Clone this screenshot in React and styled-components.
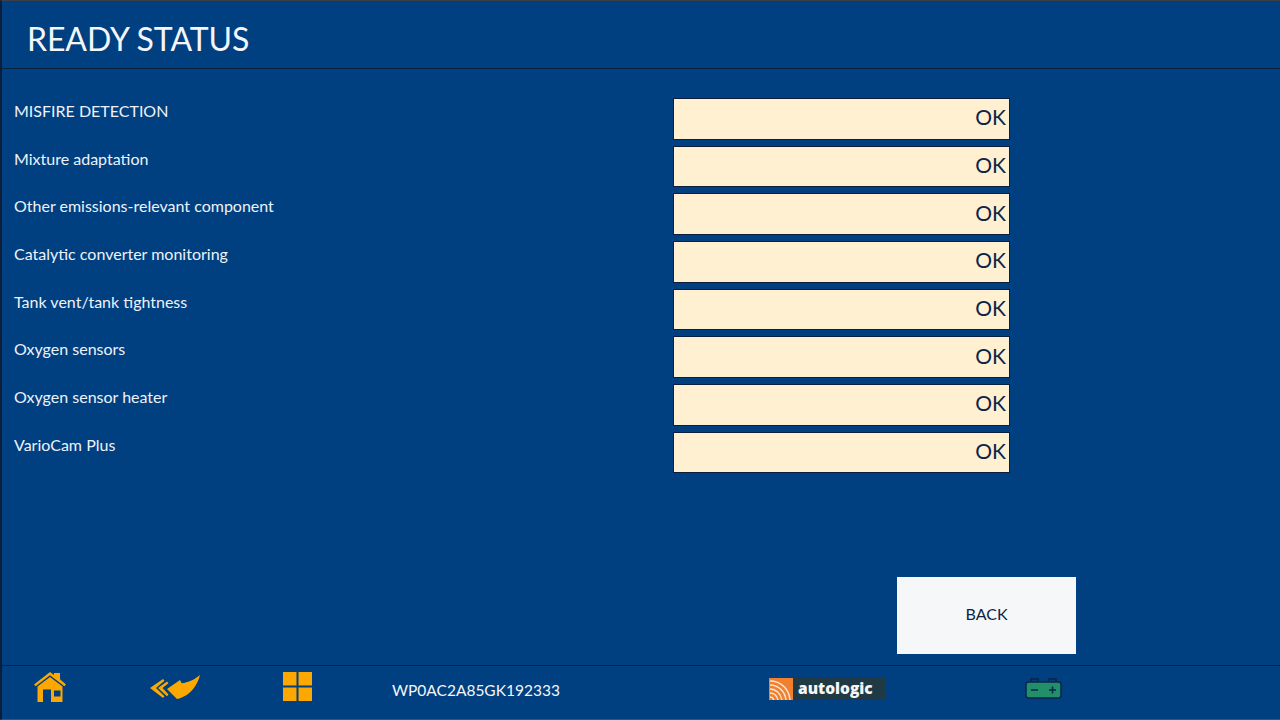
import React from "react";
import styled, { createGlobalStyle } from "styled-components";

const Global = createGlobalStyle`
  html, body { margin: 0; padding: 0; background: #003f80; }
  * { box-sizing: border-box; }
`;

const Screen = styled.div`
  width: 1280px;
  height: 720px;
  display: flex;
  flex-direction: column;
  overflow: hidden;
  background: #003f80;
  border-left: 2px solid #0b1f3c;
  border-top: 1px solid #3a3f48;
  border-bottom: 1px solid #2f5688;
  font-family: Lato, "Open Sans", sans-serif;
  color: #f4f6fa;
`;

const Header = styled.header`
  height: 68px;
  flex: none;
  display: flex;
  align-items: center;
  padding: 9px 0 0 25px;
  border-bottom: 1px solid #08213f;
`;

const Title = styled.h1`
  margin: 0;
  font-size: 32px;
  font-weight: 400;
  letter-spacing: -0.1px;
  line-height: 1;
`;

const Main = styled.main`
  flex: 1;
  display: flex;
  flex-direction: column;
  padding: 29px 204px 11px 12px;
`;

const Rows = styled.div`
  display: flex;
  flex-direction: column;
  gap: 6.2px;
`;

const Row = styled.div`
  display: grid;
  grid-template-columns: 659px 337px;
  height: 41.5px;
`;

const Label = styled.div`
  font-size: 16px;
  line-height: 20px;
  padding-top: 3px;
  color: #eef2f8;
`;

const Value = styled.div`
  height: 41.5px;
  display: flex;
  align-items: center;
  justify-content: flex-end;
  padding: 0 3px 4px 0;
  background: #fff0d2;
  border: 1px solid #0b1f3c;
  color: #0b2547;
  font-size: 21px;
`;

const Actions = styled.div`
  margin-top: auto;
  display: flex;
  justify-content: flex-end;
`;

const BackButton = styled.button`
  width: 179px;
  height: 77px;
  border: none;
  background: #f6f7f9;
  color: #0b2547;
  font-family: inherit;
  font-size: 16px;
  padding: 0 0 5px;
`;

const Footer = styled.footer`
  height: 54px;
  flex: none;
  display: flex;
  align-items: flex-start;
  padding-left: 31px;
  border-top: 1px solid #08213f;
`;

const Slot = styled.div`
  display: flex;
  flex: none;
  align-items: center;
  margin-left: ${(p) => p.$ml || 0}px;
  margin-top: ${(p) => p.$mt || 0}px;
`;

const Vin = styled.div`
  width: 170px;
  font-size: 15.5px;
  line-height: 19px;
  white-space: nowrap;
  color: #f4f6fa;
`;

const Logo = styled.div`
  display: flex;
  align-items: center;
  height: 22px;
`;

const LogoName = styled.span`
  height: 22px;
  width: 92px;
  background: #1f3a44;
  color: #f4f6fa;
  font-family: "Open Sans", sans-serif;
  font-weight: 800;
  font-size: 15.5px;
  line-height: 21px;
  padding-left: 5px;
`;

const Home = () => (
  <svg width="34" height="30" viewBox="0 0 34 30" display="block">
    <path fill="#fca800" d="M21 1h6v6.200l6 5.300-1.600 1.800L17 3.300 2.600 14.300 1 12.500 17 0l4 3z" />
    <path fill="#fca800" fillRule="evenodd" d="M4.500 14.500 17 5l12.500 9.500V30H18V17.500h-8V30H4.500zM21 18.500v6h6.500v-6z" />
  </svg>
);

const Back = () => (
  <svg width="52" height="25" viewBox="0 0 52 25" display="block">
    <path fill="#fca800" d="M0 13 13 4l1.500 1.800L6 13l8.500 8.200L13 23z" />
    <path fill="#fca800" d="M8 13 17 6.500l1.500 1.800L12.500 13l6 6.500-1.500 1.800z" />
    <path fill="#fca800" d="M17 14 30 5l1.700 3.300C38 7.500 45 4.500 50 0c-2 8-7 16-13.300 20-3 1.800-7 3.500-9.700 4z" />
  </svg>
);

const Tiles = () => (
  <svg width="29" height="29" viewBox="0 0 29 29" display="block">
    <path fill="#fca800" d="M0 0h13.500v13.500H0zM15.500 0H29v13.500H15.500zM0 15.500h13.500V29H0zM15.500 15.500H29V29H15.500z" />
  </svg>
);

const LogoMark = () => (
  <svg width="24" height="22" viewBox="0 0 24 22" display="block">
    <rect width="24" height="22" fill="#f08030" />
    <g fill="none" stroke="#fde3c8" strokeWidth="1.400">
      <path d="M1 3c11 0 19 8 20 19" />
      <path d="M1 7c8 0 15 6 16 15" />
      <path d="M1 11c6 0 11 5 12 11" />
      <path d="M1 15c4 0 7 3 8 7" />
      <path d="M1 19c2 0 3 1 4 3" />
    </g>
  </svg>
);

const Battery = () => (
  <svg width="37" height="21" viewBox="0 0 37 21" display="block">
    <path fill="none" stroke="#0b2547" strokeWidth="1.500" d="M6 4V1h7v3M24 4V1h7v3" />
    <rect x="1" y="4" width="35" height="16" rx="2.500" fill="#21906a" stroke="#0b2547" strokeWidth="1.500" />
    <path stroke="#0b2547" strokeWidth="1.600" d="M6 12h7M24 12h7M27.500 8.500v7" />
  </svg>
);

const rows = [
  "MISFIRE DETECTION",
  "Mixture adaptation",
  "Other emissions-relevant component",
  "Catalytic converter monitoring",
  "Tank vent/tank tightness",
  "Oxygen sensors",
  "Oxygen sensor heater",
  "VarioCam Plus",
];

export default function App() {
  return (
    <Screen>
      <Global />
      <Header>
        <Title>READY STATUS</Title>
      </Header>
      <Main>
        <Rows>
          {rows.map((name) => (
            <Row key={name}>
              <Label>{name}</Label>
              <Value>OK</Value>
            </Row>
          ))}
        </Rows>
        <Actions>
          <BackButton>BACK</BackButton>
        </Actions>
      </Main>
      <Footer>
        <Slot $mt={6}><Home /></Slot>
        <Slot $ml={83} $mt={9}><Back /></Slot>
        <Slot $ml={81} $mt={6}><Tiles /></Slot>
        <Slot $ml={80} $mt={15}><Vin>WP0AC2A85GK192333</Vin></Slot>
        <Slot $ml={207} $mt={12}>
          <Logo><LogoMark /><LogoName>autologic</LogoName></Logo>
        </Slot>
        <Slot $ml={140} $mt={12}><Battery /></Slot>
      </Footer>
    </Screen>
  );
}
